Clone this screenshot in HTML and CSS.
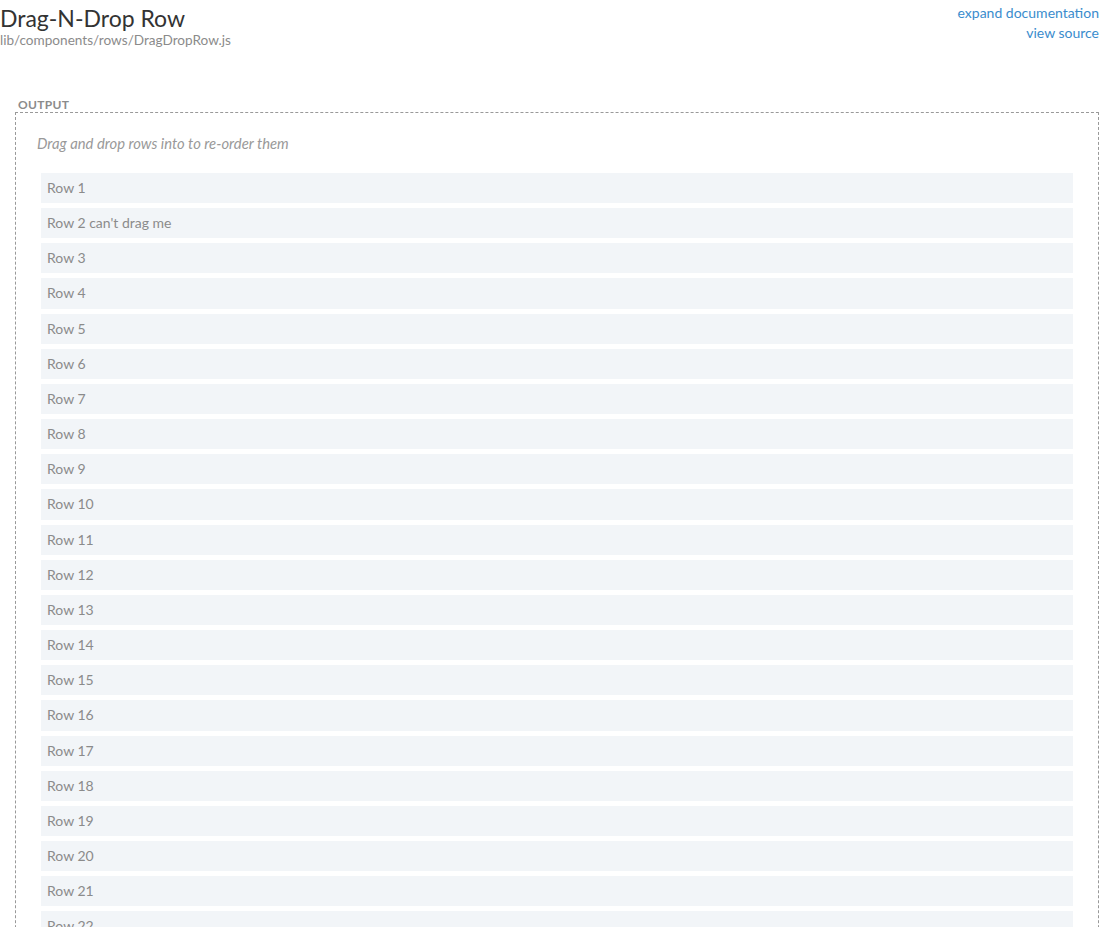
FILE: index.html
```html
<!DOCTYPE html>
<html>
<head>
<meta charset="utf-8">
<link rel="stylesheet" href="styles.css">
</head>
<body>
<div class="header">
  <div class="title-block">
    <h1 class="title">Drag-N-Drop Row</h1>
    <div class="path">lib/components/rows/DragDropRow.js</div>
  </div>
  <div class="links">
    <a class="link" href="#">expand documentation</a>
    <a class="link" href="#">view source</a>
  </div>
</div>
<div class="output-label">OUTPUT</div>
<div class="output">
  <p class="hint">Drag and drop rows into to re-order them</p>
  <div class="rows">
    <div class="row">Row 1</div>
    <div class="row">Row 2 can't drag me</div>
    <div class="row">Row 3</div>
    <div class="row">Row 4</div>
    <div class="row">Row 5</div>
    <div class="row">Row 6</div>
    <div class="row">Row 7</div>
    <div class="row">Row 8</div>
    <div class="row">Row 9</div>
    <div class="row">Row 10</div>
    <div class="row">Row 11</div>
    <div class="row">Row 12</div>
    <div class="row">Row 13</div>
    <div class="row">Row 14</div>
    <div class="row">Row 15</div>
    <div class="row">Row 16</div>
    <div class="row">Row 17</div>
    <div class="row">Row 18</div>
    <div class="row">Row 19</div>
    <div class="row">Row 20</div>
    <div class="row">Row 21</div>
    <div class="row">Row 22</div>
    <div class="row">Row 23</div>
    <div class="row">Row 24</div>
  </div>
</div>
</body>
</html>
```
FILE: styles.css
```css
html, body {
  margin: 0;
  padding: 0;
  background: #fff;
  font-family: "Lato", "Open Sans", sans-serif;
  overflow: hidden;
}
.header {
  display: flex;
  justify-content: space-between;
  align-items: flex-start;
  padding-top: 5px;
}
.title {
  margin: 0;
  font-size: 23px;
  font-weight: 400;
  color: #333;
  line-height: 26px;
}
.path {
  font-size: 13.6px;
  color: #8b8b8b;
  line-height: 18px;
}
.links {
  display: flex;
  flex-direction: column;
  align-items: flex-end;
  margin-top: -2px;
}
.link {
  color: #3a8ccd;
  text-decoration: none;
  font-size: 14px;
  line-height: 20px;
}
.output-label {
  margin-top: 49px;
  margin-left: 18px;
  font-size: 12px;
  letter-spacing: 0.3px;
  font-weight: 700;
  color: #8b8b8b;
  line-height: 14px;
}
.output {
  margin-left: 15px;
  border: 1px dashed #999;
  padding: 21px 25px 0 21px;
}
.hint {
  margin: 0 0 21px 0;
  font-size: 14.8px;
  font-style: italic;
  color: #999;
  line-height: 18px;
}
.rows {
  padding-left: 4px;
}
.row {
  background: #f2f5f8;
  color: #8b8b8b;
  font-size: 14px;
  line-height: 20.16px;
  padding: 5px 6px;
  margin-bottom: 5px;
}
```
